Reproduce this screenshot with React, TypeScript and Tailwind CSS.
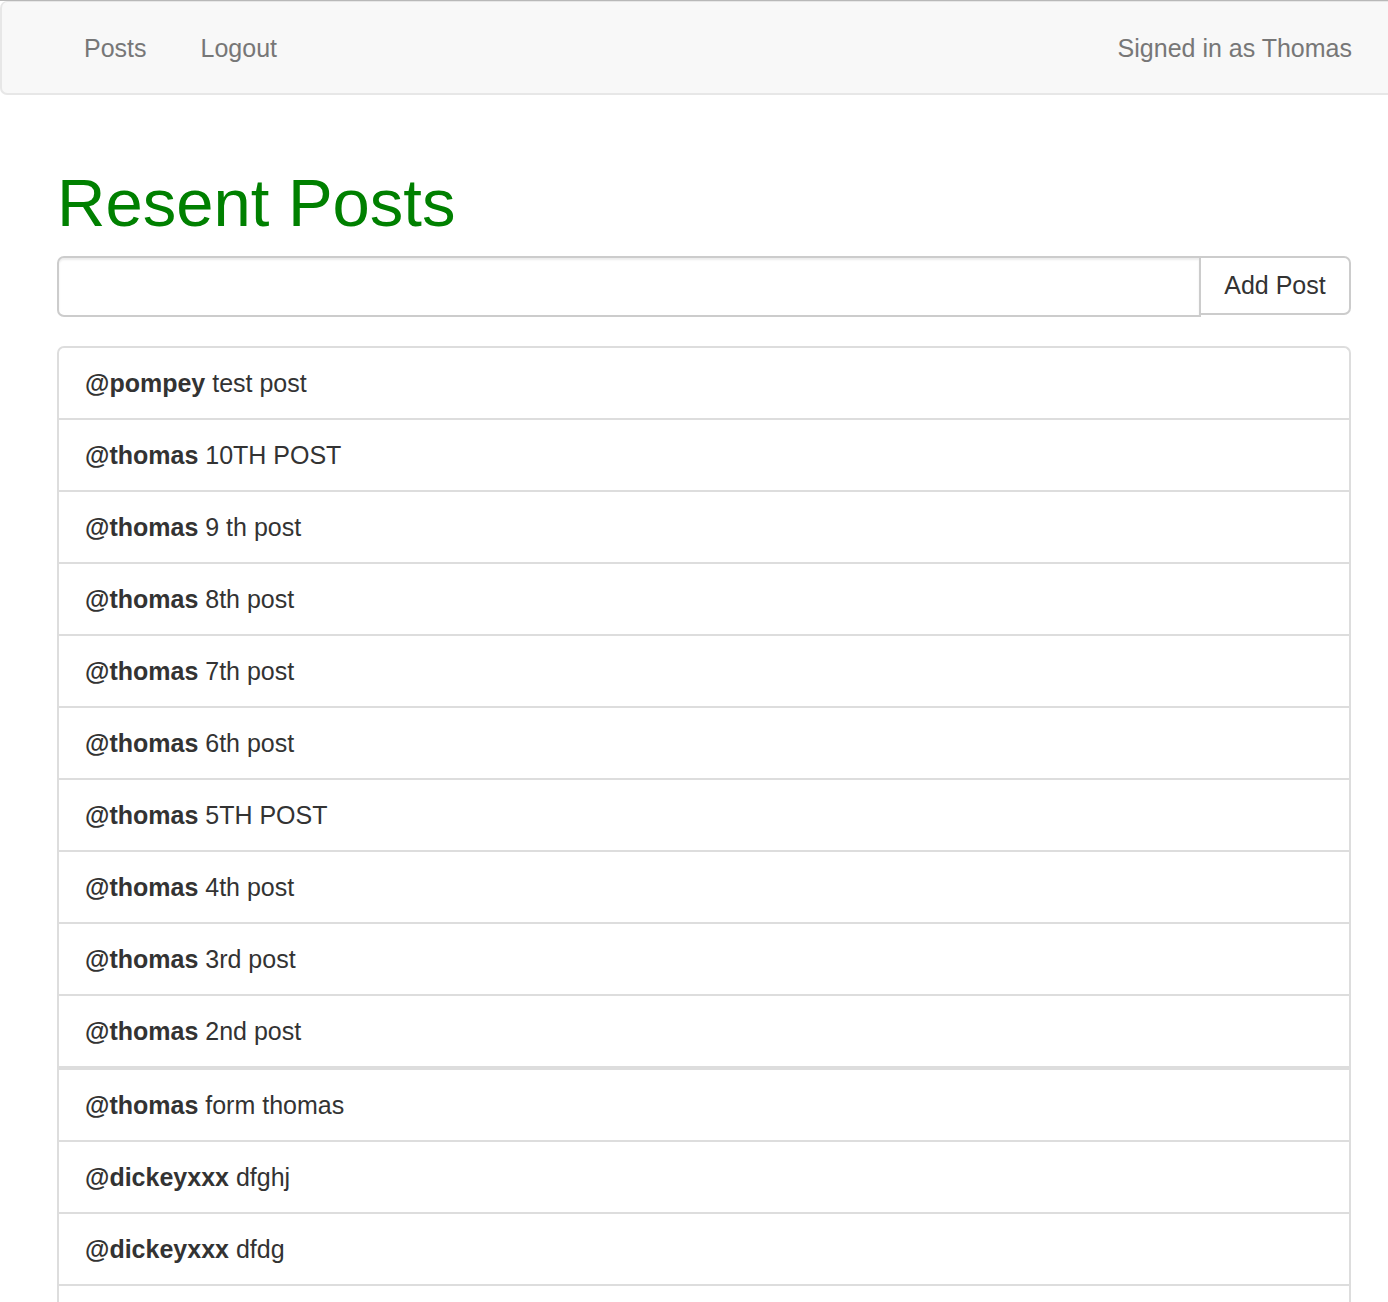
import React from "react";

const posts: [string, string][] = [
  ["pompey", "test post"],
  ["thomas", "10TH POST"],
  ["thomas", "9 th post"],
  ["thomas", "8th post"],
  ["thomas", "7th post"],
  ["thomas", "6th post"],
  ["thomas", "5TH POST"],
  ["thomas", "4th post"],
  ["thomas", "3rd post"],
  ["thomas", "2nd post"],
  ["thomas", "form thomas"],
  ["dickeyxxx", "dfghj"],
  ["dickeyxxx", "dfdg"],
];

export default function App() {
  return (
    <div
      className="min-h-[1302px] bg-white text-[#333]"
      style={{ fontFamily: '"Liberation Sans", Arial, sans-serif' }}
    >
      <div className="h-[1px] bg-[#b8b8b8]" />
      <nav className="flex h-[94px] items-center justify-between rounded-bl-[7px] rounded-tl-[7px] border-b-2 border-l-2 border-t border-[#e7e7e7] bg-[#f8f8f8] pl-[55px] pr-[36px] pt-[3px] text-[25px] text-[#777]">
        <div className="flex">
          <a className="px-[27px]">Posts</a>
          <a className="px-[27px]">Logout</a>
        </div>
        <span>Signed in as Thomas</span>
      </nav>
      <main className="pl-[57px] pr-[37px]">
        <h1 className="mt-[72px] mb-[18px] text-[67px] leading-[71px] font-normal text-[#008000]">
          Resent Posts
        </h1>
        <div className="flex h-[61px]">
          <input
            className="h-[61px] flex-1 rounded-l-[7px] border-2 border-[#ccc] bg-white px-[22px] text-[25px] shadow-[inset_0_2px_2px_rgba(0,0,0,0.075)] outline-none"
            type="text"
          />
          <button className="-ml-[2px] h-[59px] w-[152px] rounded-r-[7px] border-2 border-[#ccc] bg-white text-[25px] text-[#333]">
            Add Post
          </button>
        </div>
        <ul className="mt-[29px]">
          {posts.map(([user, text], i) => (
            <li
              key={i}
              className={
                "flex h-[72px] items-center border-x-2 border-t-2 border-[#ddd] pl-[26px] text-[25px] leading-[36px] " +
                (i === 0 ? "rounded-t-[7px] " : "") +
                (i === 10 ? "h-[74px] border-t-4" : "")
              }
            >
              <span>
                <b className="font-bold">@{user}</b> {text}
              </span>
            </li>
          ))}
          <li className="h-[72px] border-x-2 border-t-2 border-[#ddd]" />
        </ul>
      </main>
    </div>
  );
}
